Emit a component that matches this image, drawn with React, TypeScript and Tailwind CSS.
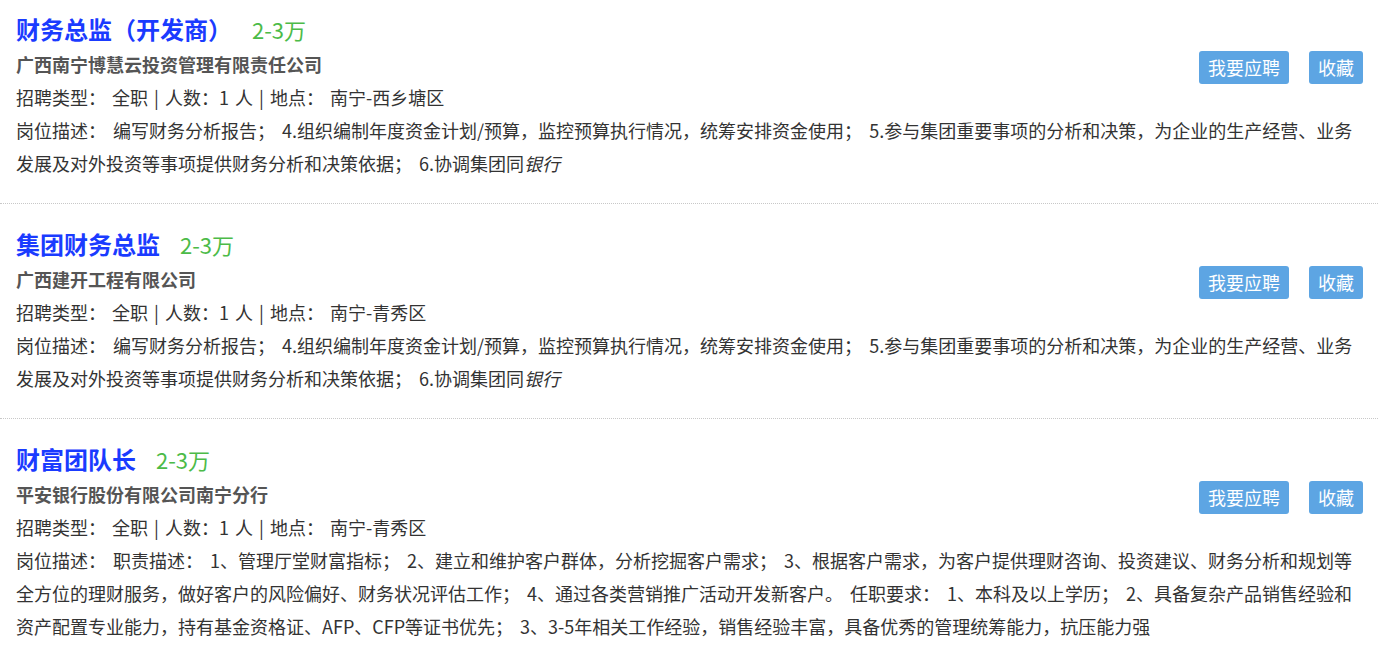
import React from "react";

interface Job {
  title: string;
  salary: string;
  company: string;
  info: string;
  desc: React.ReactNode;
}

const jobs: Job[] = [
  {
    title: "财务总监（开发商）",
    salary: "2-3万",
    company: "广西南宁博慧云投资管理有限责任公司",
    info: "招聘类型： 全职 | 人数：1 人 | 地点： 南宁-西乡塘区",
    desc: (
      <>
        岗位描述： 编写财务分析报告； 4.组织编制年度资金计划/预算，监控预算执行情况，统筹安排资金使用； 5.参与集团重要事项的分析和决策，为企业的生产经营、业务发展及对外投资等事项提供财务分析和决策依据； 6.协调集团同<i>银行</i>
      </>
    ),
  },
  {
    title: "集团财务总监",
    salary: "2-3万",
    company: "广西建开工程有限公司",
    info: "招聘类型： 全职 | 人数：1 人 | 地点： 南宁-青秀区",
    desc: (
      <>
        岗位描述： 编写财务分析报告； 4.组织编制年度资金计划/预算，监控预算执行情况，统筹安排资金使用； 5.参与集团重要事项的分析和决策，为企业的生产经营、业务发展及对外投资等事项提供财务分析和决策依据； 6.协调集团同<i>银行</i>
      </>
    ),
  },
  {
    title: "财富团队长",
    salary: "2-3万",
    company: "平安银行股份有限公司南宁分行",
    info: "招聘类型： 全职 | 人数：1 人 | 地点： 南宁-青秀区",
    desc: (
      <>
        岗位描述： 职责描述： 1、管理厅堂财富指标； 2、建立和维护客户群体，分析挖掘客户需求； 3、根据客户需求，为客户提供理财咨询、投资建议、财务分析和规划等全方位的理财服务，做好客户的风险偏好、财务状况评估工作； 4、通过各类营销推广活动开发新客户。 任职要求： 1、本科及以上学历； 2、具备复杂产品销售经验和资产配置专业能力，持有基金资格证、AFP、CFP等证书优先； 3、3-5年相关工作经验，销售经验丰富，具备优秀的管理统筹能力，抗压能力强
      </>
    ),
  },
];

const JobCard: React.FC<{ job: Job }> = ({ job }) => (
  <div className="border-b border-dotted border-[#c8c8c8] pl-4 pr-[15px] pt-[21px] pb-[23px]">
    <div className="flex items-start justify-between">
      <div>
        <div className="flex items-baseline leading-[38px]">
          <h3 className="text-[24px] font-bold text-[#1a3bff]">{job.title}</h3>
          <span className="ml-5 text-[22px] text-[#4cbb48]">{job.salary}</span>
        </div>
        <p className="text-[18px] font-bold leading-[32px] text-[#555]">{job.company}</p>
        <p className="text-[18px] leading-[34px] text-[#333] [word-spacing:2px]">{job.info}</p>
      </div>
      <div className="flex gap-5 pt-[41px]">
        <button className="h-[33px] rounded-[3px] bg-[#5da5e3] px-[9px] text-[18px] leading-[33px] text-white">
          我要应聘
        </button>
        <button className="h-[33px] rounded-[3px] bg-[#5da5e3] px-[9px] text-[18px] leading-[33px] text-white">
          收藏
        </button>
      </div>
    </div>
    <p className="text-[18px] leading-[33px] text-[#333] [word-spacing:3px]">{job.desc}</p>
  </div>
);

export default function App() {
  return (
    <div
      className="h-[652px] overflow-hidden bg-white"
      style={{ fontFamily: '"Noto Sans CJK SC", "Noto Sans", sans-serif' }}
    >
      <div className="-mt-[11px] w-[1378px]">
        {jobs.map((job, i) => (
          <JobCard key={i} job={job} />
        ))}
      </div>
    </div>
  );
}
